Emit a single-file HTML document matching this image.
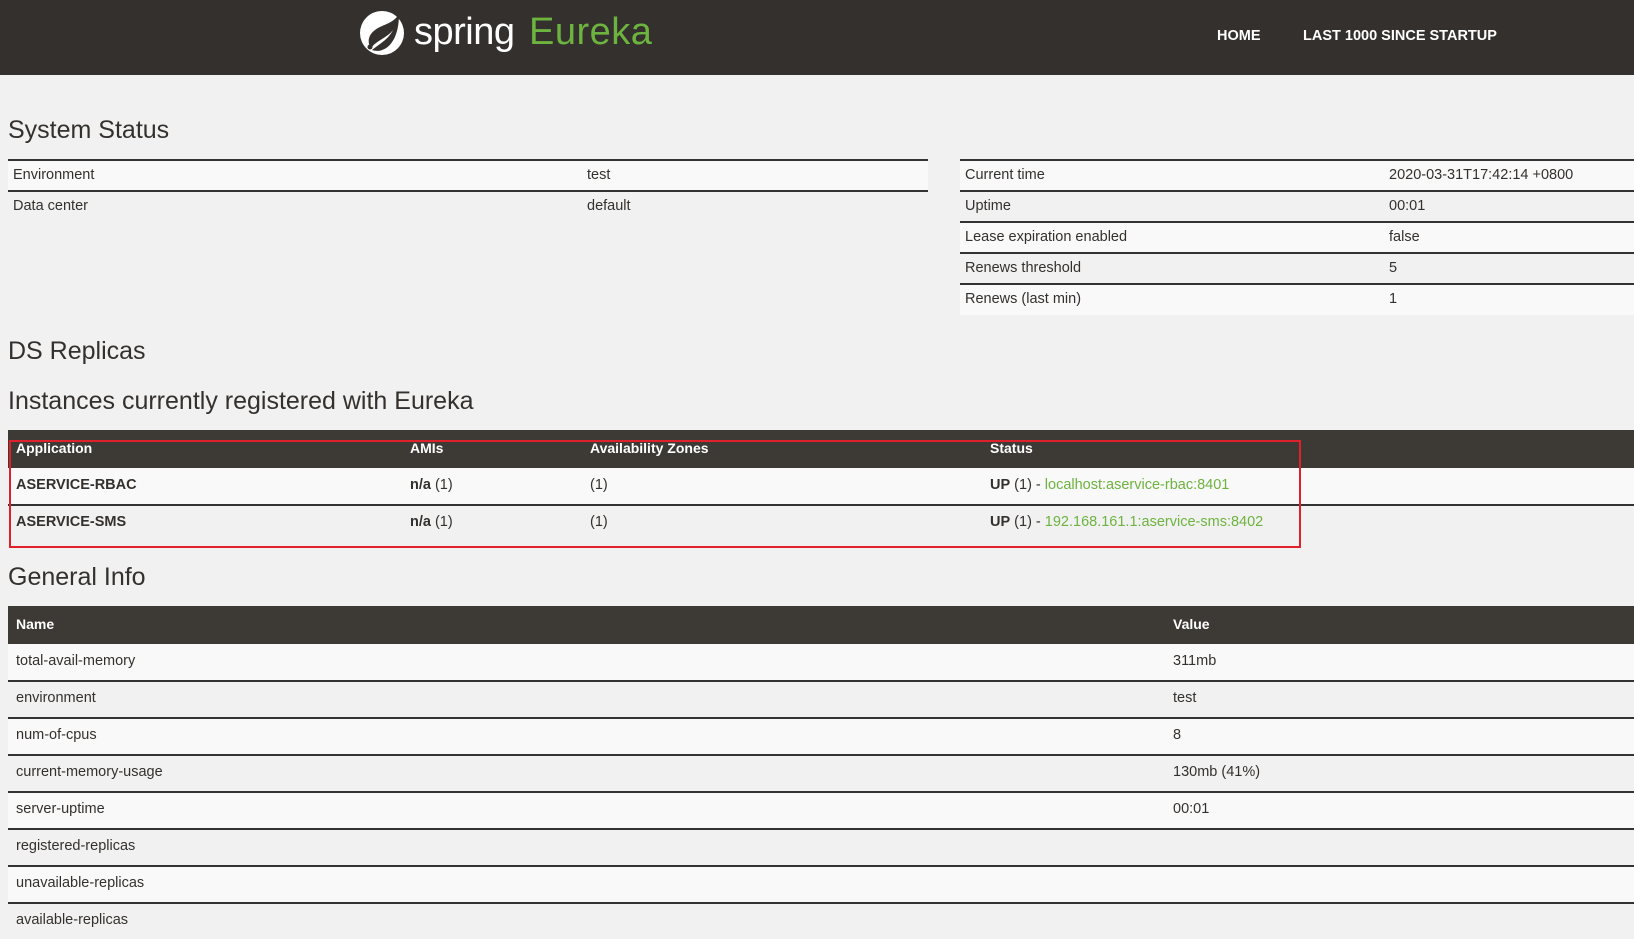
<!DOCTYPE html>
<html><head><meta charset="utf-8"><style>
*{margin:0;padding:0;box-sizing:border-box}
body{width:1634px;height:924px;overflow:hidden;background:#f1f1f1;font-family:"Liberation Sans",sans-serif;color:#34302d;position:relative}
.nav{position:absolute;left:0;top:0;width:1634px;height:75px;background:#34302d}
.a{position:absolute;white-space:nowrap}
h2{position:absolute;font-weight:normal;font-size:25px;left:8px;white-space:nowrap}
.row{position:absolute;font-size:14.5px;white-space:nowrap}
.row span{position:absolute;top:0}
.hd{background:#3d3935;color:#fff;font-weight:bold;font-size:14px}
.line{position:absolute;height:2px;background:#333}
.g{color:#6db33f}
</style></head><body>
<div class="nav">
<svg class="a" style="left:359px;top:10px" width="46" height="46" viewBox="0 0 46 46"><circle cx="23" cy="23" r="22" fill="#fff"/><path d="M40 4 C34 14 24 14 16 20 C9 25 8 33 12 38 C18 30 28 28 34 20 C29 30 20 34 13 40 C25 44 40 34 40 4Z" fill="#34302d"/><circle cx="11" cy="37" r="2.5" fill="#34302d"/></svg>
<div class="a" style="left:414px;top:11px;font-size:38px;color:#fff;letter-spacing:-0.5px">spring</div>
<div class="a" style="left:529px;top:11px;font-size:38px;color:#6db33f;letter-spacing:0.5px">Eureka</div>
<div class="a" style="left:1217px;top:28px;font-size:14.5px;color:#fff;font-weight:bold">HOME</div>
<div class="a" style="left:1303px;top:28px;font-size:14.5px;color:#fff;font-weight:bold">LAST 1000 SINCE STARTUP</div>
</div>

<h2 style="top:116px">System Status</h2>
<div class="line" style="left:8px;width:920px;top:159px"></div>
<div class="row" style="left:8px;width:920px;top:161px;height:30px;background:#f9f9f9"><span style="left:5px;top:6px">Environment</span><span style="left:579px;top:6px">test</span></div>
<div class="line" style="left:8px;width:920px;top:190px"></div>
<div class="row" style="left:8px;width:920px;top:192px;height:30px"><span style="left:5px;top:6px">Data center</span><span style="left:579px;top:6px">default</span></div>

<div class="line" style="left:960px;width:674px;top:159px"></div>
<div class="row" style="left:960px;width:674px;top:161px;height:30px;background:#f9f9f9"><span style="left:5px;top:6px">Current time</span><span style="left:429px;top:6px">2020-03-31T17:42:14 +0800</span></div>
<div class="line" style="left:960px;width:674px;top:190px"></div>
<div class="row" style="left:960px;width:674px;top:192px;height:30px"><span style="left:5px;top:6px">Uptime</span><span style="left:429px;top:6px">00:01</span></div>
<div class="line" style="left:960px;width:674px;top:221px"></div>
<div class="row" style="left:960px;width:674px;top:223px;height:30px;background:#f9f9f9"><span style="left:5px;top:6px">Lease expiration enabled</span><span style="left:429px;top:6px">false</span></div>
<div class="line" style="left:960px;width:674px;top:252px"></div>
<div class="row" style="left:960px;width:674px;top:254px;height:30px"><span style="left:5px;top:6px">Renews threshold</span><span style="left:429px;top:6px">5</span></div>
<div class="line" style="left:960px;width:674px;top:283px"></div>
<div class="row" style="left:960px;width:674px;top:285px;height:30px;background:#f9f9f9"><span style="left:5px;top:6px">Renews (last min)</span><span style="left:429px;top:6px">1</span></div>

<h2 style="top:337px">DS Replicas</h2>
<h2 style="top:387px">Instances currently registered with Eureka</h2>
<div class="row hd" style="left:8px;width:1626px;top:430px;height:38px"><span style="left:8px;top:10px">Application</span><span style="left:402px;top:10px">AMIs</span><span style="left:582px;top:10px">Availability Zones</span><span style="left:982px;top:10px">Status</span></div>
<div class="row" style="left:8px;width:1626px;top:468px;height:36px;background:#f9f9f9"><span style="left:8px;top:9px;font-weight:bold">ASERVICE-RBAC</span><span style="left:402px;top:9px"><b>n/a</b> (1)</span><span style="left:582px;top:9px">(1)</span><span style="left:982px;top:9px"><b>UP</b> (1) - <span class="g" style="position:static">localhost:aservice-rbac:8401</span></span></div>
<div class="line" style="left:8px;width:1626px;top:504px"></div>
<div class="row" style="left:8px;width:1626px;top:506px;height:36px"><span style="left:8px;top:8px;font-weight:bold">ASERVICE-SMS</span><span style="left:402px;top:8px"><b>n/a</b> (1)</span><span style="left:582px;top:8px">(1)</span><span style="left:982px;top:8px"><b>UP</b> (1) - <span class="g" style="position:static">192.168.161.1:aservice-sms:8402</span></span></div>
<div class="a" style="left:9px;top:440px;width:1292px;height:108px;border:2px solid #e0202a"></div>

<h2 style="top:563px">General Info</h2>
<div class="row hd" style="left:8px;width:1626px;top:606px;height:38px"><span style="left:8px;top:10px">Name</span><span style="left:1165px;top:10px">Value</span></div>
<div class="row" style="left:8px;width:1626px;top:644px;height:36px;background:#f9f9f9"><span style="left:8px;top:9px">total-avail-memory</span><span style="left:1165px;top:9px">311mb</span></div>
<div class="line" style="left:8px;width:1626px;top:680px"></div>
<div class="row" style="left:8px;width:1626px;top:682px;height:35px"><span style="left:8px;top:8px">environment</span><span style="left:1165px;top:8px">test</span></div>
<div class="line" style="left:8px;width:1626px;top:717px"></div>
<div class="row" style="left:8px;width:1626px;top:719px;height:35px;background:#f9f9f9"><span style="left:8px;top:8px">num-of-cpus</span><span style="left:1165px;top:8px">8</span></div>
<div class="line" style="left:8px;width:1626px;top:754px"></div>
<div class="row" style="left:8px;width:1626px;top:756px;height:35px"><span style="left:8px;top:8px">current-memory-usage</span><span style="left:1165px;top:8px">130mb (41%)</span></div>
<div class="line" style="left:8px;width:1626px;top:791px"></div>
<div class="row" style="left:8px;width:1626px;top:793px;height:35px;background:#f9f9f9"><span style="left:8px;top:8px">server-uptime</span><span style="left:1165px;top:8px">00:01</span></div>
<div class="line" style="left:8px;width:1626px;top:828px"></div>
<div class="row" style="left:8px;width:1626px;top:830px;height:35px"><span style="left:8px;top:8px">registered-replicas</span></div>
<div class="line" style="left:8px;width:1626px;top:865px"></div>
<div class="row" style="left:8px;width:1626px;top:867px;height:35px;background:#f9f9f9"><span style="left:8px;top:8px">unavailable-replicas</span></div>
<div class="line" style="left:8px;width:1626px;top:902px"></div>
<div class="row" style="left:8px;width:1626px;top:904px;height:35px"><span style="left:8px;top:8px">available-replicas</span></div>
</body></html>
